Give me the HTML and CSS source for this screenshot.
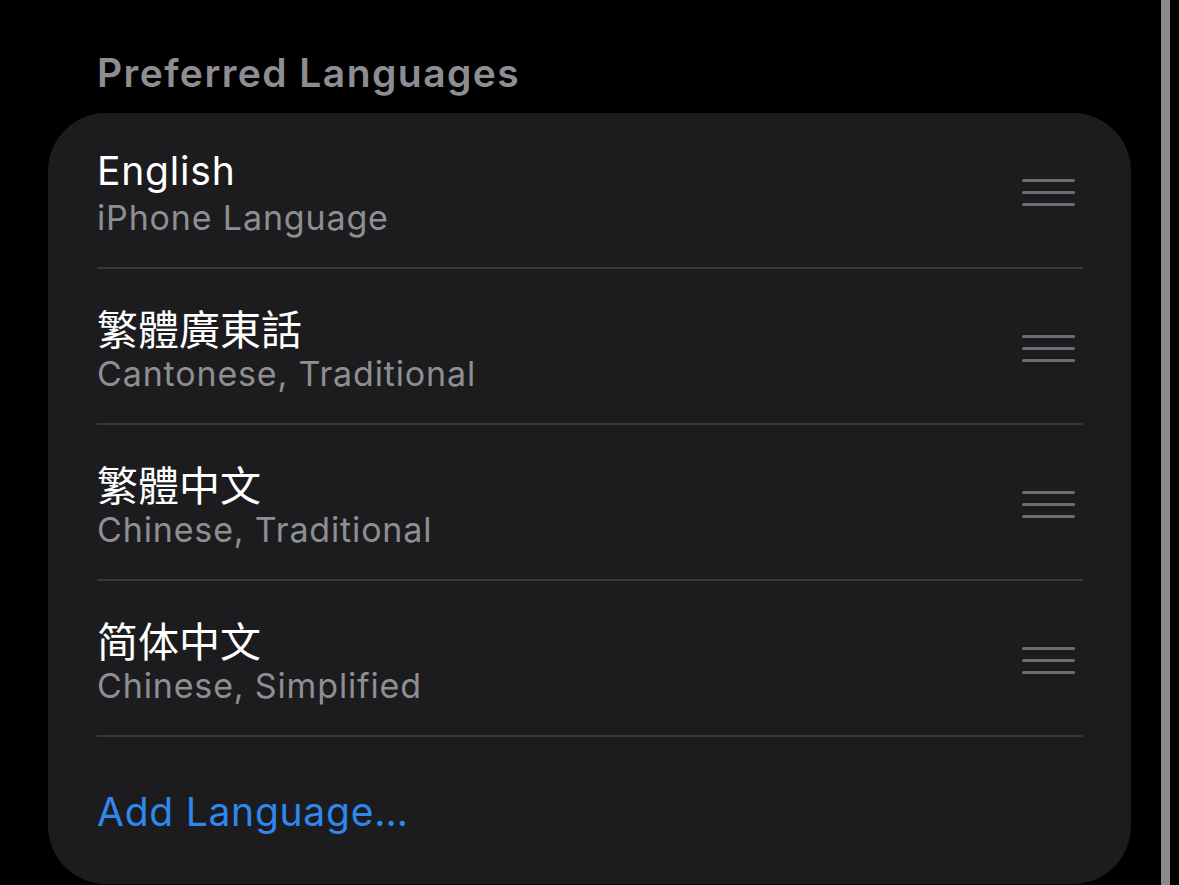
FILE: index.html
```html
<!DOCTYPE html>
<html lang="en">
<head>
<meta charset="utf-8">
<title>Preferred Languages</title>
<link rel="stylesheet" href="styles.css">
</head>
<body>
<div class="screen">
  <main class="content">
    <h2 class="section-title">Preferred Languages</h2>
    <section class="card">
      <div class="row">
        <div class="texts">
          <div class="title">English</div>
          <div class="subtitle">iPhone Language</div>
        </div>
        <div class="handle"><span></span><span></span><span></span></div>
      </div>
      <div class="row">
        <div class="texts">
          <div class="title" lang="zh-Hant">繁體廣東話</div>
          <div class="subtitle">Cantonese, Traditional</div>
        </div>
        <div class="handle"><span></span><span></span><span></span></div>
      </div>
      <div class="row">
        <div class="texts">
          <div class="title" lang="zh-Hant">繁體中文</div>
          <div class="subtitle">Chinese, Traditional</div>
        </div>
        <div class="handle"><span></span><span></span><span></span></div>
      </div>
      <div class="row">
        <div class="texts">
          <div class="title" lang="zh-Hans">简体中文</div>
          <div class="subtitle">Chinese, Simplified</div>
        </div>
        <div class="handle"><span></span><span></span><span></span></div>
      </div>
      <div class="add-row">Add Language…</div>
    </section>
  </main>
  <div class="scrollbar"></div>
</div>
</body>
</html>
```

FILE: styles.css
```css
* { box-sizing: border-box; }
html, body {
  margin: 0;
  padding: 0;
  background: #000;
  height: 885px;
  overflow: hidden;
}
body {
  font-family: Inter, "Noto Sans CJK TC", "Noto Sans CJK SC", sans-serif;
  color: #fff;
}
.screen {
  display: flex;
  height: 885px;
}
.content {
  width: 1161px;
  padding-left: 48px;
  padding-right: 30px;
}
.section-title {
  margin: 0;
  padding: 48px 0 0 49px;
  height: 113px;
  font-size: 39px;
  line-height: 50px;
  font-weight: 600;
  color: #8d8d92;
  letter-spacing: 1.45px;
}
.card {
  background: #1c1c1e;
  border-radius: 58px;
  height: 771px;
  padding: 0 48px 0 49px;
  display: flex;
  flex-direction: column;
}
.row {
  height: 156px;
  border-bottom: 2px solid #39393c;
  display: flex;
  align-items: center;
  justify-content: space-between;
  padding-top: 6px;
}
.title {
  font-size: 39px;
  line-height: 50px;
  color: #fff;
  letter-spacing: 0.8px;
}
.title:lang(zh-Hant) { font-family: "Noto Sans CJK TC", sans-serif; font-size: 41px; letter-spacing: 0; }
.title:lang(zh-Hans) { font-family: "Noto Sans CJK SC", sans-serif; font-size: 41px; letter-spacing: 0; }
.subtitle {
  font-size: 34px;
  line-height: 44px;
  color: #8e8e93;
  letter-spacing: 0.85px;
}
.handle {
  width: 53px;
  margin-right: 8px;
  margin-bottom: 1px;
  display: flex;
  flex-direction: column;
  gap: 8.6px;
}
.handle span {
  display: block;
  height: 3px;
  border-radius: 2px;
  background: #6c6c71;
}
.add-row {
  flex: 1;
  display: flex;
  align-items: center;
  font-size: 39px;
  color: #2f88ee;
  letter-spacing: 0.75px;
  padding-top: 2px;
}
.scrollbar {
  width: 9px;
  background: #8a8a8a;
  height: 885px;
}
```
